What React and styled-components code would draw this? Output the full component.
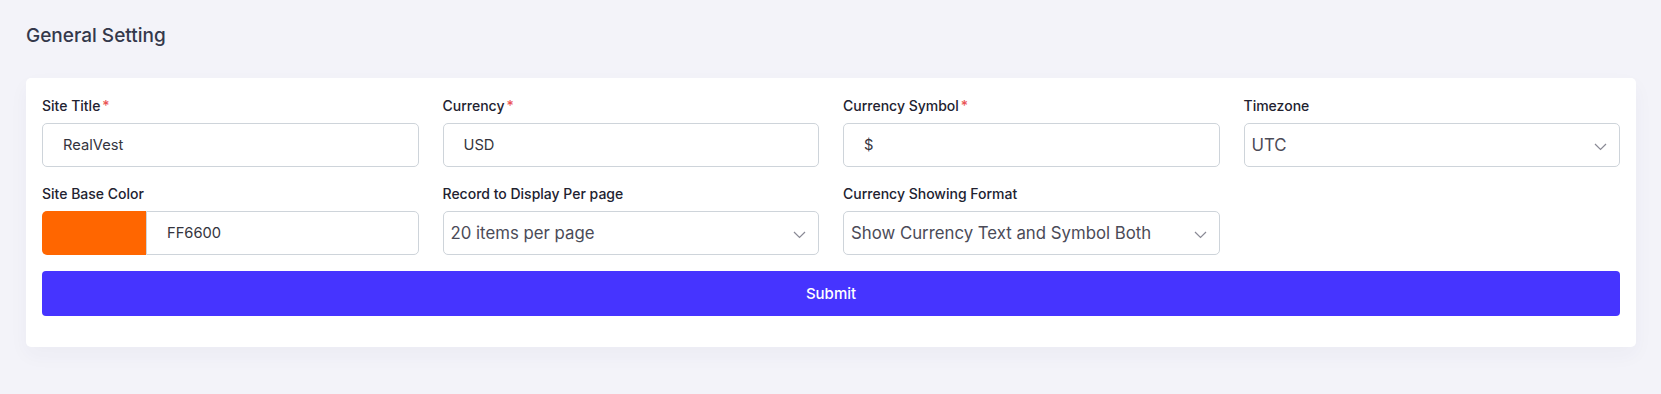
import React from "react";
import styled, { createGlobalStyle } from "styled-components";

const GlobalStyle = createGlobalStyle`
  * {
    box-sizing: border-box;
  }
  body {
    margin: 0;
    background: #f3f3f9;
    font-family: "Inter", "Noto Sans", "Liberation Sans", sans-serif;
  }
`;

const Page = styled.div`
  padding: 22px 25px 40px 26px;
`;

const Heading = styled.h3`
  margin: 0 0 29px;
  font-size: 19px;
  line-height: 27px;
  font-weight: 500;
  color: #34384b;
`;

const Card = styled.div`
  background: #fff;
  border-radius: 5px;
  box-shadow: 0 8px 20px rgba(40, 40, 90, 0.04);
  padding: 17px 16px 31px;
`;

const Grid = styled.div`
  display: grid;
  grid-template-columns: repeat(4, 1fr);
  column-gap: 24px;
  row-gap: 16px;
`;

const Field = styled.div`
  display: flex;
  flex-direction: column;
`;

const Label = styled.label`
  font-size: 14px;
  line-height: 21px;
  font-weight: 500;
  color: #222230;
  margin-bottom: 7px;
`;

const Star = styled.span`
  color: #ea5455;
  margin-left: 2px;
`;

const TextInput = styled.div`
  height: 44px;
  border: 1px solid #ced4da;
  border-radius: 5px;
  padding: 0 20px;
  display: flex;
  align-items: center;
  font-size: 14.7px;
  color: #34343d;
`;

const ColorField = styled.div`
  display: flex;
  height: 44px;
`;

const Swatch = styled.div`
  width: 104px;
  background: ${(p) => p.$color};
  border-radius: 5px 0 0 5px;
`;

const ColorInput = styled(TextInput)`
  flex: 1;
  border-radius: 0 5px 5px 0;
`;

const Select = styled.div`
  height: 44px;
  border: 1px solid #ced4da;
  border-radius: 5px;
  padding: 0 12px 0 7px;
  display: flex;
  align-items: center;
  justify-content: space-between;
  font-size: 16.8px;
  color: #4b4b57;
`;

const Chevron = styled.svg`
  width: 13px;
  height: 8px;
  margin-top: 3px;
  flex-shrink: 0;
`;

const Submit = styled.button`
  margin-top: 16px;
  width: 100%;
  height: 45px;
  border: none;
  border-radius: 4px;
  background: #4634ff;
  color: #fff;
  font-family: inherit;
  font-size: 15px;
  font-weight: 500;
`;

const Arrow = () => (
  <Chevron viewBox="0 0 13 8">
    <polyline
      points="1,1 6.5,6.5 12,1"
      fill="none"
      stroke="#8a8a95"
      strokeWidth="1.2"
    />
  </Chevron>
);

const FieldLabel = ({ children, required }) => (
  <Label>
    {children}
    {required && <Star>*</Star>}
  </Label>
);

export default function App() {
  return (
    <>
      <GlobalStyle />
      <Page>
        <Heading>General Setting</Heading>
        <Card>
          <Grid>
            <Field>
              <FieldLabel required>Site Title</FieldLabel>
              <TextInput>RealVest</TextInput>
            </Field>
            <Field>
              <FieldLabel required>Currency</FieldLabel>
              <TextInput>USD</TextInput>
            </Field>
            <Field>
              <FieldLabel required>Currency Symbol</FieldLabel>
              <TextInput>$</TextInput>
            </Field>
            <Field>
              <FieldLabel>Timezone</FieldLabel>
              <Select>
                UTC
                <Arrow />
              </Select>
            </Field>
            <Field>
              <FieldLabel>Site Base Color</FieldLabel>
              <ColorField>
                <Swatch $color="#ff6600" />
                <ColorInput>FF6600</ColorInput>
              </ColorField>
            </Field>
            <Field>
              <FieldLabel>Record to Display Per page</FieldLabel>
              <Select>
                20 items per page
                <Arrow />
              </Select>
            </Field>
            <Field>
              <FieldLabel>Currency Showing Format</FieldLabel>
              <Select>
                Show Currency Text and Symbol Both
                <Arrow />
              </Select>
            </Field>
          </Grid>
          <Submit>Submit</Submit>
        </Card>
      </Page>
    </>
  );
}
